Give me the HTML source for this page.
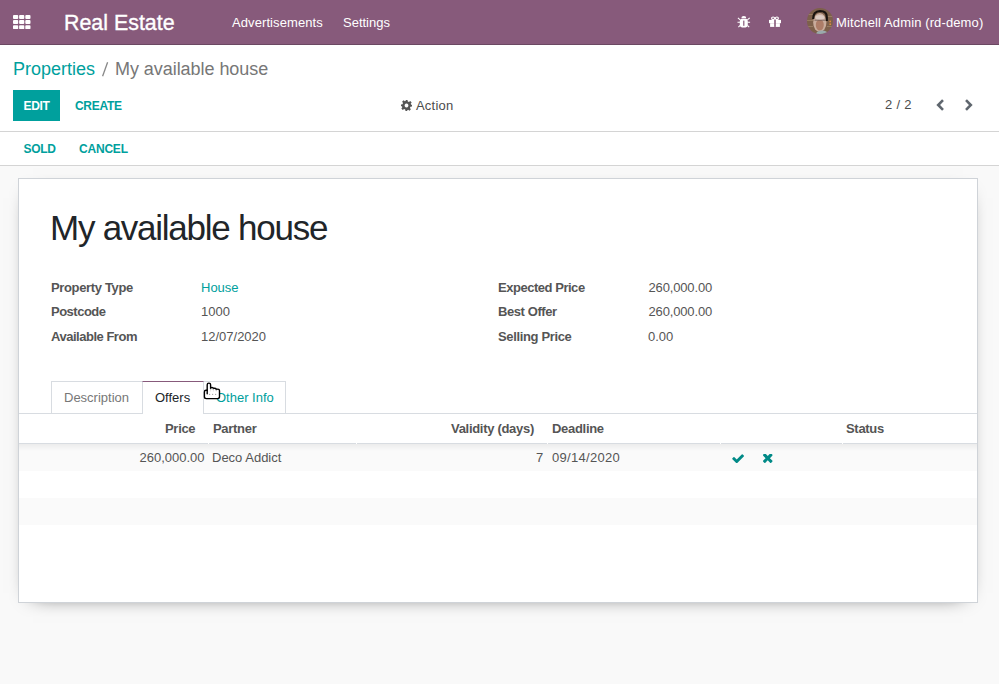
<!DOCTYPE html>
<html><head><meta charset="utf-8">
<style>
*{box-sizing:border-box;margin:0;padding:0}
html,body{width:999px;height:684px;overflow:hidden}
body{font-family:"Liberation Sans",sans-serif;background:#f9f9f9;color:#4c4c4c;font-size:13px;position:relative}
.a{position:absolute;white-space:nowrap;line-height:1}
.b{position:absolute}
#nav{position:absolute;left:0;top:0;width:999px;height:45px;background:#875a7b;border-bottom:1px solid #6b4862}
.t{color:#fff}
#cp{position:absolute;left:0;top:45px;width:999px;height:87px;background:#fff;border-bottom:1px solid #d4d4d4}
#sb{position:absolute;left:0;top:132px;width:999px;height:34px;background:#fff;border-bottom:1px solid #d4d4d4}
#sheet{position:absolute;left:18px;top:178px;width:960px;height:425px;background:#fff;border:1px solid #cfd3d8;box-shadow:0 5px 20px -15px #000}
.teal{color:#00a09d}
.lbl{font-weight:bold;color:#555;letter-spacing:-0.35px}
.val{color:#555}
.th{font-weight:bold;color:#555;letter-spacing:-0.3px}
.td{color:#555}
</style></head>
<body>
<div id="nav">
  <svg class="b" style="left:13px;top:15px" width="18" height="14.2" viewBox="0 0 18 14.2"><g fill="#fff"><rect x="0" y="0" width="5.2" height="3.9" rx="0.9"/><rect x="6.1" y="0" width="5.2" height="3.9" rx="0.9"/><rect x="12.3" y="0" width="5.2" height="3.9" rx="0.9"/><rect x="0" y="5.1" width="5.2" height="3.9" rx="0.9"/><rect x="6.1" y="5.1" width="5.2" height="3.9" rx="0.9"/><rect x="12.3" y="5.1" width="5.2" height="3.9" rx="0.9"/><rect x="0" y="10.2" width="5.2" height="3.9" rx="0.9"/><rect x="6.1" y="10.2" width="5.2" height="3.9" rx="0.9"/><rect x="12.3" y="10.2" width="5.2" height="3.9" rx="0.9"/></g></svg>
  <div class="a t" style="left:64px;top:12.5px;font-size:21.4px;-webkit-text-stroke:0.35px #fff">Real Estate</div>
  <div class="a t" style="left:232px;top:16px;font-size:13px;letter-spacing:0.09px">Advertisements</div>
  <div class="a t" style="left:343px;top:16px;font-size:13px">Settings</div>
  <!-- bug -->
  <svg class="b" style="left:737px;top:15px" width="14" height="14" viewBox="0 0 14 14">
    <path d="M4.3 3.3 A2.5 2.4 0 0 1 9.3 3.3 Z" fill="#fff"/>
    <rect x="2.8" y="3.7" width="8" height="8.7" rx="2.3" fill="#fff"/>
    <path d="M0.9 2.9 L3.2 4.8 M12.7 2.9 L10.4 4.8 M0.5 7.3 H3.2 M13.1 7.3 H10.4 M1.4 12.1 L3.2 10.4 M12.2 12.1 L10.4 10.4" stroke="#fff" stroke-width="1.1" fill="none"/>
    <rect x="6.2" y="5.6" width="1.2" height="5.2" fill="#875a7b"/>
  </svg>
  <!-- gift -->
  <svg class="b" style="left:769px;top:16px" width="12" height="12" viewBox="0 0 12 12">
    <ellipse cx="4.1" cy="2.3" rx="1.5" ry="1.3" fill="none" stroke="#fff" stroke-width="1.1"/>
    <ellipse cx="7.9" cy="2.3" rx="1.5" ry="1.3" fill="none" stroke="#fff" stroke-width="1.1"/>
    <rect x="0" y="3.9" width="12" height="3.3" fill="#fff"/>
    <rect x="1.1" y="7.2" width="9.8" height="3.7" fill="#fff"/>
    <rect x="5.2" y="3.9" width="1.6" height="7" fill="#875a7b"/>
  </svg>
  <!-- avatar -->
  <svg class="b" style="left:807px;top:8px" width="26" height="26" viewBox="0 0 26 26">
    <defs>
      <clipPath id="cc"><circle cx="13" cy="13" r="13"/></clipPath>
    </defs>
    <g clip-path="url(#cc)">
      <rect width="26" height="26" fill="#7d604b"/>
      <rect x="0" y="6" width="6" height="1" fill="#987c62"/>
      <rect x="0" y="12" width="6" height="1" fill="#987c62"/>
      <rect x="0" y="18" width="6" height="1" fill="#987c62"/>
      <rect x="20" y="8" width="6" height="1" fill="#987c62"/>
      <rect x="20" y="18" width="6" height="1" fill="#987c62"/>
      <circle cx="23.2" cy="13.4" r="0.9" fill="#d88b40"/>
      <circle cx="23.2" cy="16.2" r="0.9" fill="#d88b40"/>
      <ellipse cx="12.8" cy="14.5" rx="6.6" ry="9.5" fill="#c9ac9c"/>
      <ellipse cx="12.8" cy="17" rx="4" ry="5.5" fill="#ad7d68"/>
      <ellipse cx="12.8" cy="9.5" rx="4.5" ry="2.5" fill="#dccbc3"/>
      <path d="M6.2 11 Q6 3.2 13 3 Q19.8 3 19.8 9 V13" fill="none" stroke="#19130f" stroke-width="2.2"/>
      <path d="M7.5 12.2 H18.5" stroke="#6a5552" stroke-width="0.8"/>
      <ellipse cx="15" cy="26" rx="6" ry="3.5" fill="#9aa9ad"/>
    </g>
  </svg>
  <div class="a t" style="left:836px;top:16px;font-size:13px;letter-spacing:0.12px">Mitchell Admin (rd-demo)</div>
</div>
<div id="cp">
  <div class="a teal" style="left:13px;top:15px;font-size:18px">Properties</div>
  <svg class="b" style="left:100px;top:15px" width="12" height="18" viewBox="0 0 12 18"><path d="M2.6 16.2 L7.6 2.2" stroke="#888" stroke-width="1.3"/></svg>
  <div class="a" style="left:115px;top:15px;font-size:18px;color:#777;letter-spacing:-0.05px">My available house</div>
  <div class="b" style="left:13px;top:45px;width:47px;height:31px;background:#00a09d"></div>
  <div class="a" style="left:23.5px;top:55px;font-size:12px;font-weight:bold;color:#fff;letter-spacing:-0.3px">EDIT</div>
  <div class="a teal" style="left:75px;top:55px;font-size:12px;font-weight:bold;letter-spacing:-0.3px">CREATE</div>
  <!-- gear -->
  <svg class="b" style="left:401px;top:55px" width="11" height="11" viewBox="0 0 22 22">
    <g fill="#555">
      <path d="M9 0h4l0.6 3.2 a8 8 0 0 1 2.2 0.9 l2.7-1.9 2.8 2.8 -1.9 2.7 a8 8 0 0 1 0.9 2.2 L22 9v4l-3.2 0.6 a8 8 0 0 1 -0.9 2.2 l1.9 2.7 -2.8 2.8 -2.7-1.9 a8 8 0 0 1 -2.2 0.9 L13 22H9l-0.6-3.2 a8 8 0 0 1 -2.2-0.9 l-2.7 1.9 -2.8-2.8 1.9-2.7 a8 8 0 0 1 -0.9-2.2 L0 13V9l3.2-0.6 a8 8 0 0 1 0.9-2.2 L2.2 3.5 5 0.7 l2.7 1.9 a8 8 0 0 1 2.2-0.9Z M11 7.2 a3.8 3.8 0 1 0 0.01 0Z" fill-rule="evenodd"/>
    </g>
  </svg>
  <div class="a" style="left:416px;top:54px;font-size:13px;color:#4c4c4c;letter-spacing:0.2px">Action</div>
  <div class="a" style="left:885px;top:53px;font-size:13px;color:#4c4c4c;letter-spacing:0.3px">2 / 2</div>
  <svg class="b" style="left:936px;top:54px" width="9" height="12" viewBox="0 0 9 12">
    <path d="M7 1.2 L2.2 6 L7 10.8" stroke="#5f666e" stroke-width="2.6" fill="none" stroke-linejoin="miter"/>
  </svg>
  <svg class="b" style="left:963.5px;top:54px" width="9" height="12" viewBox="0 0 9 12">
    <path d="M2 1.2 L6.8 6 L2 10.8" stroke="#5f666e" stroke-width="2.6" fill="none" stroke-linejoin="miter"/>
  </svg>
</div>
<div id="sb">
  <div class="a teal" style="left:23.5px;top:11px;font-size:12px;font-weight:bold;letter-spacing:-0.3px">SOLD</div>
  <div class="a teal" style="left:79px;top:11px;font-size:12px;font-weight:bold;letter-spacing:-0.2px">CANCEL</div>
</div>
<div id="sheet"></div>
<!-- sheet content in page coords -->
<div class="a" style="left:50px;top:210px;font-size:35px;color:#212529;letter-spacing:-1.25px">My available house</div>
<div class="a lbl" style="left:51px;top:281px">Property Type</div>
<div class="a teal" style="left:201px;top:281px">House</div>
<div class="a lbl" style="left:51px;top:305px;letter-spacing:-0.5px">Postcode</div>
<div class="a val" style="left:201px;top:305px">1000</div>
<div class="a lbl" style="left:51px;top:330px;letter-spacing:-0.48px">Available From</div>
<div class="a val" style="left:201px;top:330px">12/07/2020</div>
<div class="a lbl" style="left:498px;top:281px;letter-spacing:-0.47px">Expected Price</div>
<div class="a val" style="left:648.5px;top:281px;letter-spacing:-0.15px">260,000.00</div>
<div class="a lbl" style="left:498px;top:305px;letter-spacing:-0.42px">Best Offer</div>
<div class="a val" style="left:648.5px;top:305px;letter-spacing:-0.15px">260,000.00</div>
<div class="a lbl" style="left:498px;top:330px">Selling Price</div>
<div class="a val" style="left:648px;top:330px">0.00</div>

<!-- tabs -->
<div class="b" style="left:19px;top:413px;width:958px;height:1px;background:#d8dce1"></div>
<div class="b" style="left:51px;top:381px;width:92px;height:32px;border:1px solid #d8dce1;border-bottom:none;background:#fff"></div>
<div class="b" style="left:142px;top:381px;width:62px;height:33px;z-index:1;border:1px solid #d8dce1;border-top:1px solid #875a7b;border-bottom:none;background:#fff"></div>
<div class="b" style="left:203px;top:381px;width:83px;height:32px;border:1px solid #d8dce1;border-bottom:none;background:#fff"></div>
<div class="a" style="left:64px;top:391px;color:#777">Description</div>
<div class="a" style="left:155px;top:391px;color:#212529;z-index:2">Offers</div>
<div class="a teal" style="left:216px;top:391px">Other Info</div>

<!-- table -->
<div class="b" style="left:19px;top:443px;width:958px;height:1px;background:#d8dce1"></div>
<div class="b" style="left:19px;top:444px;width:958px;height:27px;background:linear-gradient(#ececec,#fafafa 7px,#fafafa)"></div>
<div class="b" style="left:19px;top:498px;width:958px;height:27px;background:#fafafa"></div>
<div class="b" style="left:208px;top:443px;width:1px;height:1px;background:#fff"></div>
<div class="b" style="left:356px;top:443px;width:1px;height:1px;background:#fff"></div>
<div class="b" style="left:547px;top:443px;width:1px;height:1px;background:#fff"></div>
<div class="b" style="left:720px;top:443px;width:1px;height:1px;background:#fff"></div>
<div class="b" style="left:842px;top:443px;width:1px;height:1px;background:#fff"></div>

<div class="a th" style="left:165px;top:422px">Price</div>
<div class="a th" style="left:213px;top:422px">Partner</div>
<div class="a th" style="left:451px;top:422px">Validity (days)</div>
<div class="a th" style="left:552px;top:422px">Deadline</div>
<div class="a th" style="left:846px;top:422px">Status</div>

<div class="a td" style="left:139.5px;top:451px">260,000.00</div>
<div class="a td" style="left:212px;top:451px">Deco Addict</div>
<div class="a td" style="left:536px;top:451px">7</div>
<div class="a td" style="left:552px;top:451px;letter-spacing:0.3px">09/14/2020</div>
<svg class="b" style="left:732px;top:454px" width="12" height="9" viewBox="93 402 1578 988">
  <path fill="#018a87" d="M1671 566q0 40-28 68l-724 724-136 136q-28 28-68 28t-68-28l-136-136-362-362q-28-28-28-68t28-68l136-136q28-28 68-28t68 28l294 295 656-657q28-28 68-28t68 28l136 136q28 28 28 68z"/>
</svg>
<svg class="b" style="left:763px;top:454px" width="9.5" height="9" viewBox="110 346 1188 1100" preserveAspectRatio="none">
  <path fill="#018a87" d="M1298 1214q0 40-28 68l-136 136q-28 28-68 28t-68-28l-294-294-294 294q-28 28-68 28t-68-28l-136-136q-28-28-28-68t28-68l294-294-294-294q-28-28-28-68t28-68l136-136q28-28 68-28t68 28l294 294 294-294q28-28 68-28t68 28l136 136q28 28 28 68t-28 68l-294 294 294 294q28 28 28 68z"/>
</svg>

<!-- cursor -->
<svg class="b" style="left:200px;top:380px;z-index:5" width="22" height="22" viewBox="0 0 22 22">
  <path d="M7.2 10.3 V4.8 Q7.2 3.1 8.9 3.1 Q10.6 3.1 10.6 4.8 V8.8 Q10.6 7.4 12 7.4 Q13.4 7.4 13.4 8.9 Q13.4 8.2 14.85 8.2 Q16.3 8.2 16.3 9.8 Q16.3 9.1 17.9 9.1 Q19.5 9.1 19.5 10.8 V16.8 Q19.5 18.6 17.6 18.6 H6.3 Q4.4 18.6 4.4 16.8 V12 Q4.4 10.3 6.0 10.3 Z" fill="#fff" stroke="#000" stroke-width="1.4" stroke-linejoin="round"/>
  <path d="M7.2 10.3 V13.8" stroke="#000" stroke-width="1.4" stroke-linecap="round"/>
  <path d="M9 14.4 h1.2 M12 14.4 h1.2 M15 14.4 h1.2" stroke="#999" stroke-width="0.9"/>
  <path d="M10.6 8.8 V11.5 M13.4 8.9 V11.5 M16.3 9.8 V11.5" stroke="#ddd" stroke-width="0.8"/>
</svg>
</body></html>
